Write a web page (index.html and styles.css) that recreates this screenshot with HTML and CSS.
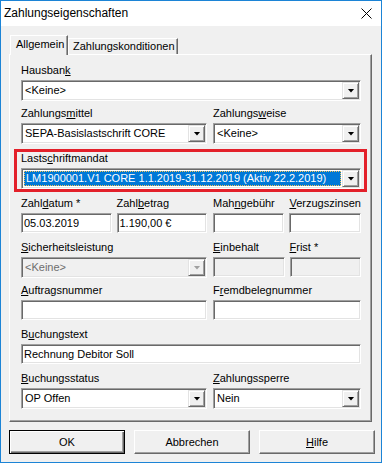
FILE: index.html
```html
<!DOCTYPE html>
<html lang="de">

<head>
    <meta charset="UTF-8">
    <meta name="viewport" content="width=device-width, initial-scale=1.0">
    <title>Zahlungseigenschaften</title>
    <link rel="stylesheet" href="styles.css">
</head>

<body>
    <div class="window">
        <div class="titlebar">
            <span class="title">Zahlungseigenschaften</span>
            <svg class="close" width="11" height="11" viewBox="0 0 11 11">
                <path d="M0.5 0.5L10.5 10.5M10.5 0.5L0.5 10.5" stroke="#000" stroke-width="1" fill="none"/>
            </svg>
        </div>

        <div class="tabs">
            <div class="tab active">Allgemein</div>
            <div class="tab">Zahlungskonditionen</div>
        </div>

        <div class="panel">
            <div class="field">
                <label>Hausban<u>k</u></label>
                <div class="box"><span class="value">&lt;Keine&gt;</span><span class="drop"></span></div>
            </div>

            <div class="row gap-6">
                <div class="field">
                    <label>Zahlungs<u>m</u>ittel</label>
                    <div class="box"><span class="value">SEPA-Basislastschrift CORE</span><span class="drop"></span></div>
                </div>
                <div class="field">
                    <label>Zahlungs<u>w</u>eise</label>
                    <div class="box"><span class="value">&lt;Keine&gt;</span><span class="drop"></span></div>
                </div>
            </div>

            <div class="mandat">
                <div class="field">
                    <label>Lasts<u>c</u>hriftmandat</label>
                    <div class="box"><span class="value selected">LM1900001.V1 CORE 1.1.2019-31.12.2019 (Aktiv 22.2.2019)</span><span class="drop"></span></div>
                </div>
            </div>

            <div class="row gap-5">
                <div class="half">
                    <div class="field">
                        <label>Zahl<u>d</u>atum *</label>
                        <div class="box edit"><span class="value">05.03.2019</span></div>
                    </div>
                    <div class="field">
                        <label>Zahl<u>b</u>etrag</label>
                        <div class="box edit"><span class="value">1.190,00 €</span></div>
                    </div>
                </div>
                <div class="half">
                    <div class="field">
                        <label>Mah<u>n</u>gebühr</label>
                        <div class="box edit"><span class="value"></span></div>
                    </div>
                    <div class="field">
                        <label><u>V</u>erzugszinsen</label>
                        <div class="box edit"><span class="value"></span></div>
                    </div>
                </div>
            </div>

            <div class="row gap-8">
                <div class="field">
                    <label><u>S</u>icherheitsleistung</label>
                    <div class="box disabled"><span class="value">&lt;Keine&gt;</span><span class="drop"></span></div>
                </div>
                <div class="half">
                    <div class="field">
                        <label><u>E</u>inbehalt</label>
                        <div class="box edit disabled"><span class="value"></span></div>
                    </div>
                    <div class="field">
                        <label><u>F</u>rist *</label>
                        <div class="box edit disabled"><span class="value"></span></div>
                    </div>
                </div>
            </div>

            <div class="row gap-6">
                <div class="field">
                    <label><u>A</u>uftragsnummer</label>
                    <div class="box edit"><span class="value"></span></div>
                </div>
                <div class="field">
                    <label>F<u>r</u>emdbelegnummer</label>
                    <div class="box edit"><span class="value"></span></div>
                </div>
            </div>

            <div class="field gap-8">
                <label>B<u>u</u>chungstext</label>
                <div class="box edit"><span class="value">Rechnung Debitor Soll</span></div>
            </div>

            <div class="row gap-8">
                <div class="field">
                    <label><u>B</u>uchungsstatus</label>
                    <div class="box"><span class="value">OP Offen</span><span class="drop"></span></div>
                </div>
                <div class="field">
                    <label><u>Z</u>ahlungssperre</label>
                    <div class="box"><span class="value">Nein</span><span class="drop"></span></div>
                </div>
            </div>
        </div>

        <div class="buttons">
            <button class="btn default">OK</button>
            <button class="btn">Abbrechen</button>
            <button class="btn"><u>H</u>ilfe</button>
        </div>
    </div>
</body>

</html>
```

FILE: styles.css
```css
* {
    margin: 0;
    box-sizing: border-box;
}

body {
    font-family: "Liberation Sans", Arial, sans-serif;
    font-size: 11px;
    color: #000;
    background: #fff;
}

.window {
    width: 382px;
    height: 463px;
    border: 1px solid #1c84d6;
    background: #f0f0f0;
    overflow: hidden;
}

.titlebar {
    height: 25px;
    background: #fff;
    display: flex;
    justify-content: space-between;
}

.title {
    font-size: 12px;
    line-height: 25px;
    padding-left: 3px;
}

.close {
    margin: 7px 9px 0 0;
}

/* tabs */
.tabs {
    display: flex;
    align-items: flex-end;
    margin: 9px 0 -1px 9px;
}

.tab {
    width: 110px;
    height: 16px;
    margin-bottom: 1px;
    padding: 1px 0 0 4px;
    line-height: 13px;
    border: 1px solid;
    border-bottom: none;
    border-color: #fff #696969 transparent #fff;
    box-shadow: inset -1px 0 #a0a0a0;
    background: #f0f0f0;
}

.tab.active {
    width: 58px;
    height: 20px;
    margin-bottom: 0;
    padding: 2px 0 0 5px;
    position: relative;
    z-index: 1;
}

.panel {
    width: 363px;
    margin-left: 8px;
    padding: 9px 10px 12px 11px;
    border: 1px solid;
    border-color: #fff #696969 #696969 #fff;
    box-shadow: inset -1px -1px #a0a0a0;
}

/* fields */
.field label {
    display: block;
    height: 16px;
    line-height: 13px;
    white-space: nowrap;
}

.row {
    display: grid;
    grid-template-columns: 186px 148px;
    column-gap: 6px;
}

.half {
    display: grid;
    grid-template-columns: 1fr 1fr;
    column-gap: 5px;
}

.gap-5 { margin-top: 5px; }
.gap-6 { margin-top: 6px; }
.gap-8 { margin-top: 8px; }

.box {
    display: flex;
    height: 21px;
    padding: 1px;
    border: 1px solid;
    border-color: #a0a0a0 #fff #fff #a0a0a0;
    box-shadow: inset 1px 1px #696969, inset -1px -1px #e3e3e3;
    background: #fff;
}

.box .value {
    flex: 1;
    min-width: 0;
    line-height: 17px;
    padding-left: 2px;
    white-space: nowrap;
    overflow: hidden;
}

.box.edit {
    height: 20px;
}

.box.edit .value {
    line-height: 16px;
    padding-left: 1px;
}

.drop {
    width: 17px;
    display: flex;
    align-items: center;
    justify-content: center;
    border: 1px solid;
    border-color: #e3e3e3 #696969 #696969 #e3e3e3;
    box-shadow: inset 1px 1px #fff, inset -1px -1px #a0a0a0;
    background: #f0f0f0;
}

.drop::after {
    content: "";
    width: 7px;
    height: 4px;
    margin-left: 1px;
    background: #000;
    clip-path: polygon(0 0, 100% 0, 50% 100%);
}

.box.disabled {
    background: #f0f0f0;
    color: #6d6d6d;
}

.box.disabled .drop::after {
    background: #a0a0a0;
}

/* highlighted mandate */
.mandat {
    margin: 5px -6px 0 -7px;
    padding: 0 3px 0 4px;
    border: 3px solid #e3202a;
}

.box .value.selected {
    margin: 1px 1px 1px 1px;
    padding-left: 1px;
    line-height: 13px;
    background: #0078d7;
    color: #fff;
    border: 1px dotted #f3c257;
}

/* buttons */
.buttons {
    display: flex;
    gap: 9px;
    margin: 8px 0 0 8px;
}

.btn {
    width: 116px;
    height: 24px;
    padding: 0;
    font: inherit;
    color: #000;
    line-height: 22px;
    text-align: center;
    background: #f0f0f0;
    border: 1px solid;
    border-color: #fff #696969 #696969 #fff;
    box-shadow: inset -1px -1px #a0a0a0;
}

.btn.default {
    border-color: #000;
    box-shadow: inset 1px 1px #fff, inset -1px -1px #696969, inset -2px -2px #a0a0a0;
}
```
